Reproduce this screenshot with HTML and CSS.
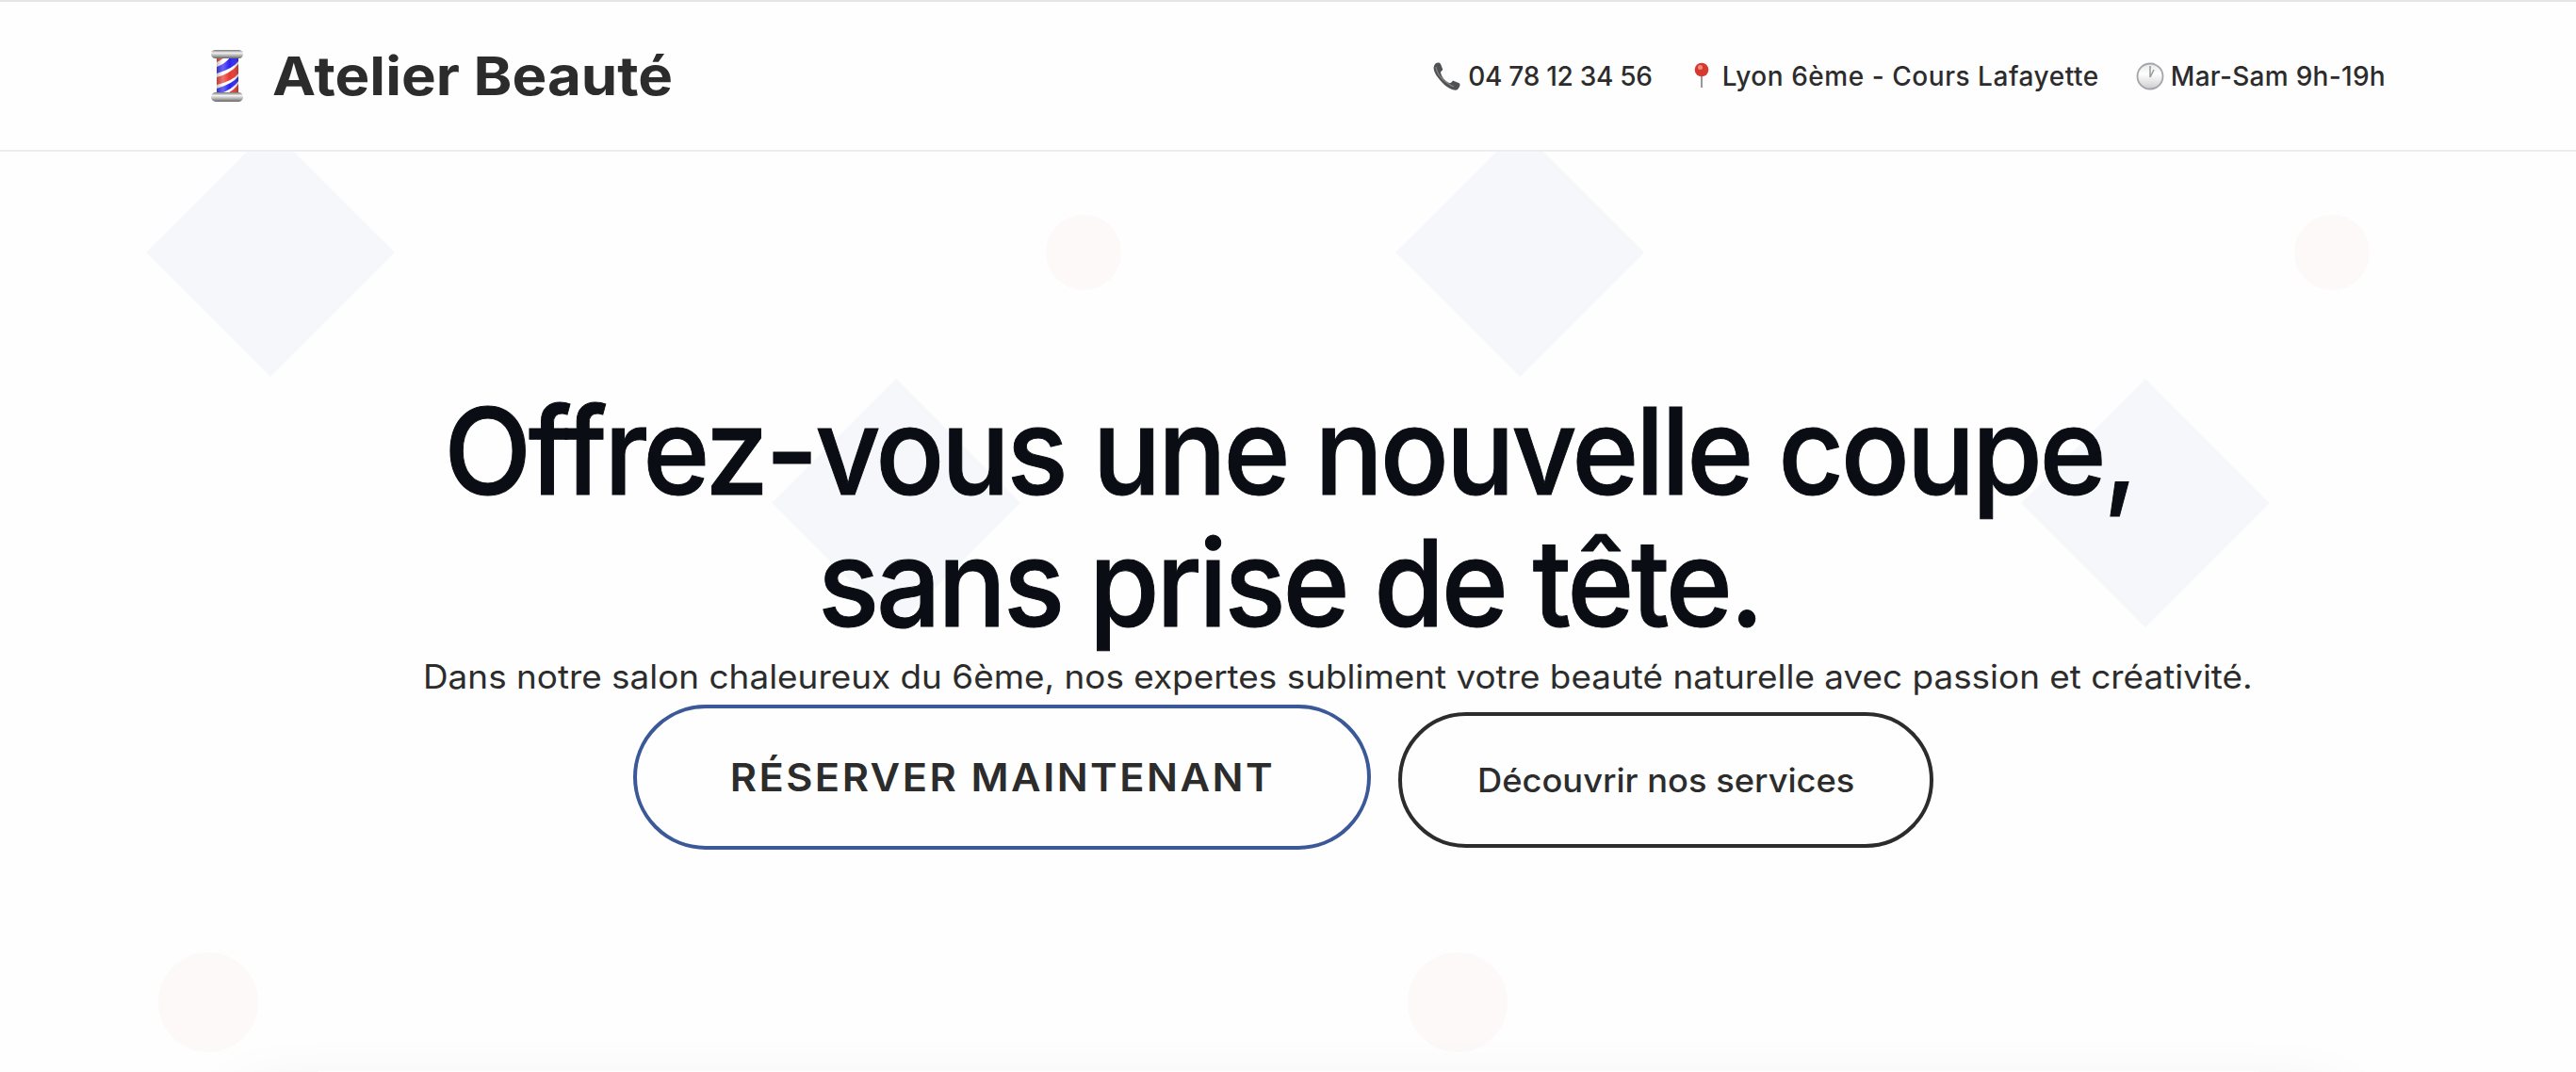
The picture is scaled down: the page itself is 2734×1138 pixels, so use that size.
FILE: index.html
```html
<!DOCTYPE html>
<html lang="fr">
<head>
<meta charset="utf-8">
<title>Atelier Beauté</title>
<link rel="stylesheet" href="styles.css">
</head>
<body>
<header class="header">
  <div class="brand">
    <svg class="brand-icon" viewBox="0 0 36 58">
      <defs>
        <linearGradient id="metal" x2="0" y2="1"><stop offset="0" stop-color="#777"/><stop offset=".35" stop-color="#f2f2f2"/><stop offset=".7" stop-color="#aaa"/><stop offset="1" stop-color="#666"/></linearGradient>
        <linearGradient id="gloss"><stop offset="0" stop-color="#555" stop-opacity=".35"/><stop offset=".3" stop-color="#fff" stop-opacity=".3"/><stop offset=".6" stop-color="#fff" stop-opacity="0"/><stop offset="1" stop-color="#333" stop-opacity=".3"/></linearGradient>
        <clipPath id="tube"><path d="M7 9h23v39H7z"/></clipPath>
      </defs>
      <g clip-path="url(#tube)">
        <path fill="#fff" d="M7 9h23v39H7z"/>
        <path fill="#e8362b" d="M7 8h9Q12 12 7 14zM7 30Q22 26 30 16v10Q24 34 7 38zM30 37v11H16Q26 44 30 37z"/>
        <path fill="#2a20f0" d="M7 19Q16 16 22 8h8v5Q24 21 7 26zM7 42Q24 37 30 29v5Q24 43 9 48H7z"/>
        <path fill="url(#gloss)" d="M7 9h23v39H7z"/>
      </g>
      <rect x="1" y="1" width="34" height="9" rx="4.5" fill="url(#metal)"/>
      <rect x="1" y="46" width="34" height="10" rx="5" fill="url(#metal)"/>
    </svg>
    <span class="brand-name">Atelier Beauté</span>
  </div>
  <div class="contact">
    <span class="contact-item">
      <svg class="icon-phone" viewBox="0 0 29 30"><path fill="#505153" d="M1 4C2 1 6-1 8 2l2 5c1 2-2 2-2 4 1 5 5 9 9 11 3 1 3-3 5-2l5 2c3 1 1 5-1 7-3 2-9-1-14-5C6 18-1 10 1 4z"/><path d="M3 5c1 8 8 16 19 21" fill="none" stroke="#888" stroke-width="1.2"/></svg>
      <span class="phone-text">04 78 12 34 56</span>
    </span>
    <span class="contact-item contact-place">
      <svg class="icon-pin" viewBox="0 0 16 29"><path stroke="#999" stroke-width="2" d="M8 13v14"/><circle cx="8" cy="8" r="7.3" fill="#d8392f"/><circle cx="6.5" cy="5.5" r="2.5" fill="#f08a7d"/></svg>
      <span class="place-text">Lyon 6ème - Cours Lafayette</span>
    </span>
    <span class="contact-item contact-hours">
      <svg class="icon-clock" viewBox="0 0 30 30"><defs><linearGradient id="face" x2="0" y2="1"><stop offset="0" stop-color="#e4e5e8"/><stop offset=".4" stop-color="#fff"/><stop offset="1" stop-color="#ccc"/></linearGradient></defs><circle cx="15" cy="15" r="13.5" fill="url(#face)" stroke="#a3a5aa" stroke-width="1.8"/><path d="M15 4v12l4-8" fill="none" stroke="#999" stroke-width="1.5"/></svg>
      <span class="hours-text">Mar-Sam 9h-19h</span>
    </span>
  </div>
</header>
<main class="hero">
  <svg class="hero-pattern" viewBox="0 161 2734 977">
    <g fill="#f5f7fb"><path d="M287 136 419 268 287 400 155 268zM1613 136l132 132-132 132-132-132zM951 402l132 132-132 132-132-132zM2277 402l132 132-132 132-132-132z"/></g>
    <g fill="#fdf9f9"><circle cx="1150" cy="268" r="40"/><circle cx="2475" cy="268" r="40"/><circle cx="221" cy="1064" r="53"/><circle cx="1547" cy="1064" r="53"/></g>
  </svg>
  <h1 class="title">Offrez-vous une nouvelle coupe,<br>sans prise de tête.</h1>
  <p class="lead">Dans notre salon chaleureux du 6ème, nos expertes subliment votre beauté naturelle avec passion et créativité.</p>
  <div class="actions">
    <a class="button button-primary"><span class="primary-label">RÉSERVER MAINTENANT</span></a>
    <a class="button button-secondary"><span class="secondary-label">Découvrir nos services</span></a>
  </div>
</main>
<section class="panel"></section>
</body>
</html>
```
FILE: styles.css
```css
* { box-sizing: border-box; }
html, body { height: 1138px; overflow: hidden; }
body { margin: 0; background: #fefefe; color: #2c2c2c; font-family: Inter, "Liberation Sans", sans-serif; }
.header { height: 161px; padding: 0 202px 0 223px; border-top: 2px solid #e4e5e5; border-bottom: 2px solid #eeeef0; display: flex; align-items: center; justify-content: space-between; white-space: nowrap; }
.brand { display: flex; align-items: center; gap: 30px; }
.brand-icon { width: 36px; height: 58px; }
.brand-name { font-size: 57px; font-weight: 700; transform: scaleX(1.085); transform-origin: left; }
.contact { display: flex; gap: 39px; font-size: 28px; font-weight: 500; }
.contact-item { display: flex; align-items: center; gap: 8px; }
.contact-place { gap: 14px; margin-left: 5px; }
.contact-hours { gap: 7px; }
.phone-text { letter-spacing: -.27px; }
.place-text { letter-spacing: .54px; }
.hours-text { letter-spacing: .3px; }
.icon-phone { width: 29px; height: 30px; flex: none; }
.icon-pin { width: 16px; height: 29px; flex: none; }
.icon-clock { width: 30px; height: 30px; flex: none; }
.hero { position: relative; height: 976px; padding-top: 248px; display: flex; flex-direction: column; align-items: center; }
.hero-pattern { position: absolute; top: 0; left: 0; width: 2734px; height: 977px; z-index: -1; }
.title { margin: 0 0 0 4px; font-size: 128px; line-height: 140px; font-weight: 500; letter-spacing: -3.5px; -webkit-text-stroke: 1px #0a0d14; color: #0a0d14; text-align: center; white-space: nowrap; transform: scaleX(.946); }
.lead { margin: 0 0 1px 104px; width: 1940px; font-size: 35px; line-height: 58px; white-space: nowrap; transform: scaleX(1.054); transform-origin: left; }
.actions { display: flex; align-items: center; gap: 29px; margin-right: 10px; }
.button { display: flex; align-items: center; justify-content: center; border: 4px solid #2c2c2c; border-radius: 80px; white-space: nowrap; }
.button-primary { width: 783px; height: 154px; border-color: #3b5998; }
.primary-label { font-size: 41px; font-weight: 600; letter-spacing: 2.3px; transform: scaleX(1.06); }
.button-secondary { width: 568px; height: 144px; margin-top: 6px; }
.secondary-label { font-size: 35px; font-weight: 500; transform: scaleX(1.036); }
.panel { width: 2060px; height: 1px; margin: 0 auto; box-shadow: 0 118px 80px 80px rgba(0, 0, 0, .11); }
```
